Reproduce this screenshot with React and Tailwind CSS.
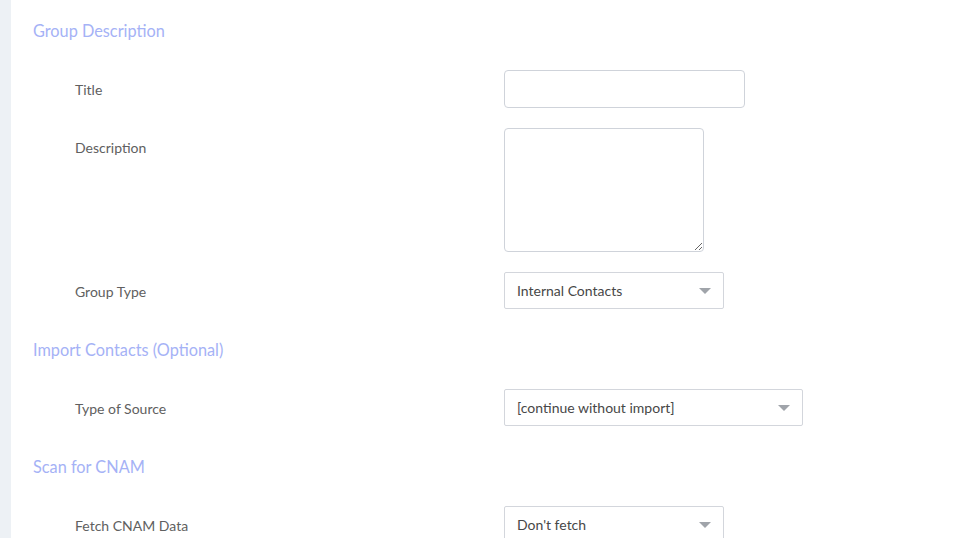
import React from "react";

function Heading({ children }) {
  return (
    <div className="h-[59px] pt-[10px] pl-[22px] text-[16.3px] leading-[20px] text-[#a5b2f6]">
      {children}
    </div>
  );
}

function Row({ label, children, mb = "mb-[21px]" }) {
  return (
    <div className={`flex ${mb}`}>
      <div className="w-[493px] pl-[64px] pt-[10px] text-[14px] leading-[19px] text-[#606060]">
        {label}
      </div>
      <div>{children}</div>
    </div>
  );
}

function Select({ value, width }) {
  return (
    <div
      className={`relative h-[37px] border border-[#d3d6dc] rounded-[2px] bg-white flex items-center pl-[12px] text-[14px] text-[#474747] ${width}`}
    >
      <span>{value}</span>
      <svg
        className="absolute right-[12px] top-1/2 -translate-y-1/2"
        width="12"
        height="6"
        viewBox="0 0 12 6"
      >
        <path d="M0 0 L12 0 L6 6 Z" fill="#a0a4aa" />
      </svg>
    </div>
  );
}

export default function App() {
  return (
    <div
      className="flex min-h-[538px] bg-white"
      style={{ fontFamily: "Lato, 'Noto Sans', sans-serif" }}
    >
      <div className="w-[11px] shrink-0 bg-[#edf1f5]" />
      <div className="flex-1 pt-[11px]">
        <Heading>Group Description</Heading>
        <Row label="Title" mb="mb-[20px]">
          <input
            type="text"
            className="block w-[241px] h-[38px] border border-[#cfd3da] rounded-[4px] bg-white outline-none"
          />
        </Row>
        <Row label="Description" mb="mb-[20px]">
          <textarea className="block w-[200px] h-[124px] border border-[#cfd3da] rounded-[4px] bg-white outline-none" />
        </Row>
        <Row label="Group Type">
          <Select value="Internal Contacts" width="w-[220px]" />
        </Row>
        <Heading>Import Contacts (Optional)</Heading>
        <Row label="Type of Source">
          <Select value="[continue without import]" width="w-[299px]" />
        </Row>
        <Heading>Scan for CNAM</Heading>
        <Row label="Fetch CNAM Data">
          <Select value="Don't fetch" width="w-[220px]" />
        </Row>
      </div>
    </div>
  );
}
